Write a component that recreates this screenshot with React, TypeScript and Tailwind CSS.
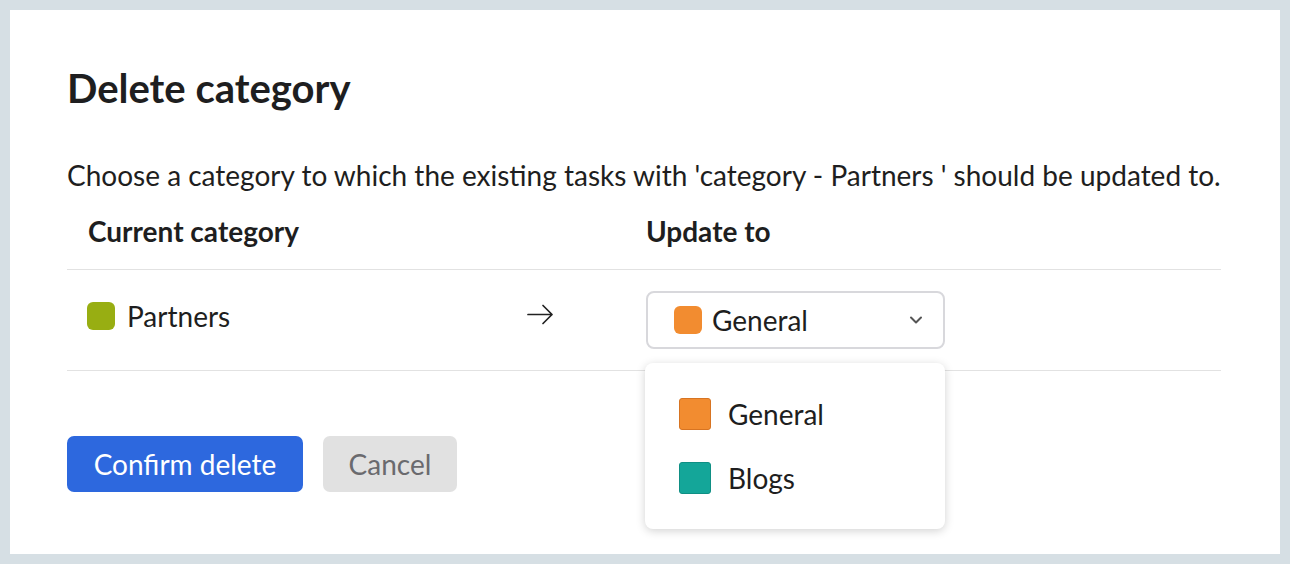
import React from 'react';

const Swatch: React.FC<{ color: string; className?: string }> = ({ color, className = '' }) => (
  <span className={`inline-block shrink-0 ${color} ${className}`} />
);

export default function App() {
  return (
    <div className="min-h-screen w-full bg-[#d6dfe4] p-[10px] font-['Lato','Noto_Sans',sans-serif] text-[#1e1e20]">
      <div className="h-[544px] bg-white pt-[54px] pl-[57px] pr-[59px]">
        <h1 className="text-[40px] font-bold leading-[48px]">Delete category</h1>
        <p className="mt-[46px] text-[28px] leading-[34px]">
          Choose a category to which the existing tasks with 'category - Partners ' should be updated to.
        </p>

        <div className="grid h-[78px] grid-cols-[441px_118px_1fr] items-center border-b border-[#e2e2e2] text-[28px] font-bold">
          <div className="pl-[21px]">Current category</div>
          <div />
          <div className="pl-[20px]">Update to</div>
        </div>

        <div className="grid h-[101px] grid-cols-[441px_118px_1fr] items-center border-b border-[#e2e2e2] text-[28px]">
          <div className="flex items-center gap-[12px] pb-[8px] pl-[20px]">
            <Swatch color="bg-[#98ae12]" className="h-[28px] w-[28px] rounded-[6px]" />
            <span>Partners</span>
          </div>
          <div className="pb-[12px] pl-[19px]">
            <svg width="27" height="21" viewBox="0 0 27 21" fill="none" stroke="#222" strokeWidth="1.7" strokeLinecap="round" strokeLinejoin="round">
              <path d="M1 10.5h24M16 1.5l9 9-9 9" />
            </svg>
          </div>
          <div className="relative pl-[20px]">
            <div className="flex h-[58px] w-[299px] items-center rounded-[8px] border-2 border-[#d8d8dc] pl-[26px] pr-[20px]">
              <Swatch color="bg-[#f28c30]" className="h-[28px] w-[28px] rounded-[6px]" />
              <span className="ml-[10px] flex-1">General</span>
              <svg width="14" height="8" viewBox="0 0 14 8" fill="none" stroke="#555" strokeWidth="2" strokeLinecap="round" strokeLinejoin="round">
                <path d="M2 1.5 7 6.5l5-5" />
              </svg>
            </div>
            <div className="absolute left-[19px] top-[72px] z-10 w-[300px] rounded-[8px] bg-white pt-[19px] pb-[19px] shadow-[0_2px_10px_rgba(0,0,0,0.18)]">
              <div className="flex h-[64px] items-center gap-[17px] pl-[34px]">
                <Swatch color="bg-[#f28c30]" className="h-[32px] w-[32px] rounded-[3px] border border-[#d77422]" />
                <span>General</span>
              </div>
              <div className="flex h-[64px] items-center gap-[17px] pl-[34px]">
                <Swatch color="bg-[#14a699]" className="h-[32px] w-[32px] rounded-[3px] border border-[#0f8f84]" />
                <span>Blogs</span>
              </div>
            </div>
          </div>
        </div>

        <div className="mt-[65px] flex gap-[20px] text-[28px]">
          <button className="h-[56px] w-[236px] rounded-[7px] bg-[#2d68de] text-white">Confirm delete</button>
          <button className="h-[56px] w-[134px] rounded-[7px] bg-[#e1e1e1] text-[#6a6a6e]">Cancel</button>
        </div>
      </div>
    </div>
  );
}
